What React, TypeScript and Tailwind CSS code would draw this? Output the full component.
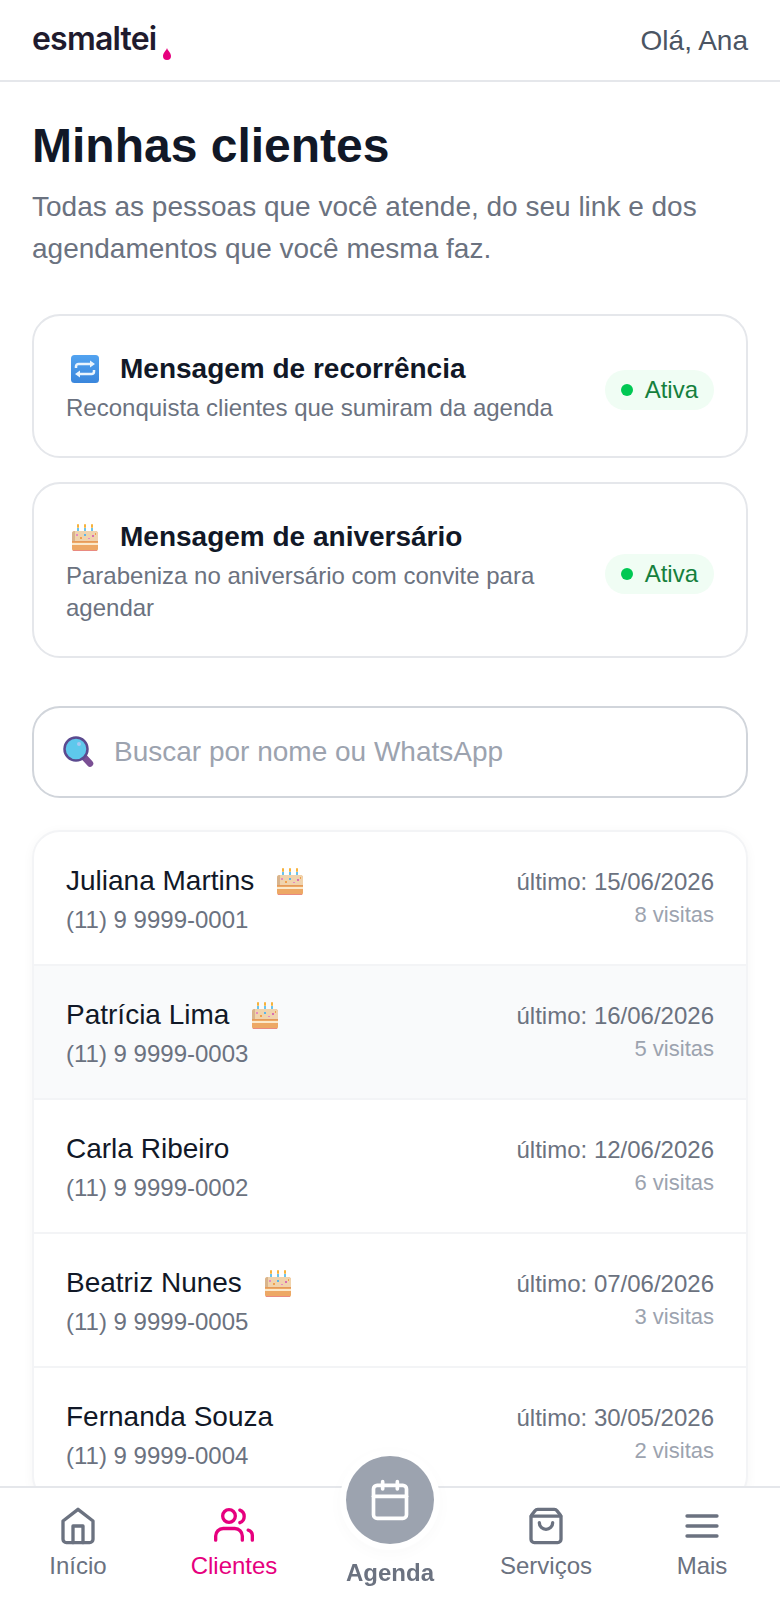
import { Calendar, ShoppingBag } from 'lucide-react';

const clients = [
  { name: 'Juliana Martins', phone: '(11) 9 9999-0001', last: '15/06/2026', visits: 8, birthday: true, hover: false },
  { name: 'Patrícia Lima', phone: '(11) 9 9999-0003', last: '16/06/2026', visits: 5, birthday: true, hover: true },
  { name: 'Carla Ribeiro', phone: '(11) 9 9999-0002', last: '12/06/2026', visits: 6, birthday: false, hover: false },
  { name: 'Beatriz Nunes', phone: '(11) 9 9999-0005', last: '07/06/2026', visits: 3, birthday: true, hover: false },
  { name: 'Fernanda Souza', phone: '(11) 9 9999-0004', last: '30/05/2026', visits: 2, birthday: false, hover: false },
];

function CakeIcon() {
  return (
    <svg width="28" height="28" viewBox="0 0 28 28" className="shrink-0">
      <rect x="6" y="5" width="2" height="5" fill="#6cc4ea" />
      <rect x="13" y="5" width="2" height="5" fill="#6cc4ea" />
      <rect x="20" y="5" width="2" height="5" fill="#6cc4ea" />
      <rect x="6" y="1" width="2" height="4" rx="1" fill="#f7b23b" />
      <rect x="13" y="1" width="2" height="4" rx="1" fill="#f7b23b" />
      <rect x="20" y="1" width="2" height="4" rx="1" fill="#f7b23b" />
      <path d="M1 11a3 3 0 0 1 3-3h20a3 3 0 0 1 3 3v15a2 2 0 0 1-2 2H3a2 2 0 0 1-2-2z" fill="#eda865" />
      <path d="M1 11a3 3 0 0 1 3-3h20a3 3 0 0 1 3 3v7H1z" fill="#f0d3ad" />
      <path d="M1 11a3 3 0 0 1 3-3v11H1z" fill="#d9b48c" />
      <rect x="1" y="18" width="26" height="1" fill="#e59a5a" />
      <rect x="1" y="20" width="26" height="2" fill="#fbe9cb" />
      <rect x="2" y="27" width="24" height="1" fill="#e98a80" />
      <rect x="5" y="11" width="2" height="2" fill="#e58bc0" />
      <rect x="13" y="11" width="2" height="2" fill="#59b5ea" />
      <rect x="21" y="12" width="2" height="2" fill="#d96fb0" />
      <rect x="9" y="14" width="2" height="2" fill="#f0a04b" />
      <rect x="17" y="15" width="2" height="1" fill="#e58bc0" />
      <rect x="24" y="10" width="1" height="2" fill="#f0a04b" />
    </svg>
  );
}

function RepeatIcon() {
  return (
    <svg width="28" height="28" viewBox="0 0 28 28" className="shrink-0">
      <defs>
        <linearGradient id="repeat-bg" x1="0" y1="0" x2="0" y2="1">
          <stop offset="0" stopColor="#52a3f0" />
          <stop offset="1" stopColor="#3a86dc" />
        </linearGradient>
      </defs>
      <rect width="28" height="28" rx="3.500" fill="url(#repeat-bg)" />
      <g fill="none" stroke="#eaf4fd" strokeWidth="2.500">
        <path d="M5 13v-1.500A2.500 2.500 0 0 1 7.500 9H20" />
        <path d="M23 15v1.500a2.500 2.500 0 0 1-2.500 2.500H8" />
      </g>
      <path d="M19 5.500v7L24 9zM9 15.500v7L4 19z" fill="#eaf4fd" />
    </svg>
  );
}

function SearchIcon() {
  return (
    <svg width="32" height="32" viewBox="0 0 32 32" className="shrink-0">
      <path d="M22 21l6 6.500" stroke="#7a4f94" strokeWidth="6.500" strokeLinecap="round" />
      <circle cx="14" cy="13" r="11.500" fill="#5ec8ec" stroke="#5b4a8f" strokeWidth="2.500" />
      <circle cx="17" cy="8" r="2" fill="#a9c8f2" />
    </svg>
  );
}

function HomeIcon() {
  return (
    <svg width="40" height="40" viewBox="0 0 24 24" fill="none" stroke="currentColor" strokeWidth="2" strokeLinecap="round" strokeLinejoin="round">
      <path d="m3 9 9-7 9 7v11a2 2 0 0 1-2 2H5a2 2 0 0 1-2-2z" />
      <path d="M9 22V12h6v10" />
    </svg>
  );
}

function UsersIcon() {
  return (
    <svg width="40" height="40" viewBox="0 0 24 24" fill="none" stroke="currentColor" strokeWidth="2" strokeLinecap="round" strokeLinejoin="round">
      <circle cx="9" cy="6" r="3.800" />
      <path d="M15.500 2.500a4 4 0 0 1 0 7.500" />
      <path d="M1 20.500V18a4.500 4.500 0 0 1 4.500-4.500h7A4.500 4.500 0 0 1 17 18v2.500" />
      <path d="M20.500 14.500A3.500 3.500 0 0 1 23 18v2.500" />
    </svg>
  );
}

function MenuIcon() {
  return (
    <svg width="40" height="40" viewBox="0 0 24 24" fill="none" stroke="currentColor" strokeWidth="2" strokeLinecap="round">
      <path d="M3 6h18M3 12h18M3 18h18" />
    </svg>
  );
}

function AutomationCard({ icon, title, text }: { icon: React.ReactNode; title: string; text: string }) {
  return (
    <div className="flex items-center justify-between gap-6 rounded-[28px] border-2 border-[#e5e7eb] bg-white p-8">
      <div className="min-w-0 flex-1">
        <div className="flex items-center gap-4 text-[28px] leading-[42px] font-bold text-[#111827]">
          <span className="flex w-[38px] justify-center">{icon}</span>
          <span>{title}</span>
        </div>
        <p className="mt-[2px] text-[24px] leading-[32px] text-[#6b7280]">{text}</p>
      </div>
      <span className="mt-[7px] flex h-10 shrink-0 items-center gap-3 rounded-full bg-[#f0fdf4] px-4 text-[24px] text-[#15803d]">
        <span className="h-3 w-3 rounded-full bg-[#00c853]" />
        Ativa
      </span>
    </div>
  );
}

function NavItem({ label, active, children }: { label: string; active?: boolean; children: React.ReactNode }) {
  return (
    <div className={`flex flex-1 flex-col items-center gap-1 pt-[18px] text-[24px] leading-[32px] ${active ? 'text-[#e6007e]' : 'text-[#6b7280]'}`}>
      {children}
      <span>{label}</span>
    </div>
  );
}

export default function App() {
  return (
    <div className="relative h-[1600px] overflow-hidden bg-white font-['Liberation_Sans',Arial,sans-serif]">
      <header className="flex h-[82px] items-center justify-between border-b-2 border-[#e5e7eb] px-8">
        <div className="mb-[2px] flex items-end gap-[7px]">
          <span className="font-['Inter',sans-serif] text-[32px] leading-none font-semibold tracking-[-0.025em] text-[#1f1b2e]">esmaltei</span>
          <svg width="8" height="12" viewBox="0 0 8 12" className="mb-[-5px]">
            <path d="M4 0C3.300 2.500 0 5 0 8a4 4 0 0 0 8 0C8 5 4.700 2.500 4 0Z" fill="#e6007e" />
          </svg>
        </div>
        <span className="mt-[2px] text-[28px] text-[#4b5563]">Olá, Ana</span>
      </header>

      <main className="px-8 pt-8">
        <h1 className="text-[48px] leading-[64px] font-bold text-[#111827]">Minhas clientes</h1>
        <p className="mt-2 text-[28px] leading-[42px] text-[#6b7280]">
          Todas as pessoas que você atende, do seu link e dos agendamentos que você mesma faz.
        </p>

        <div className="mt-11 flex flex-col gap-6">
          <AutomationCard icon={<RepeatIcon />} title="Mensagem de recorrência" text="Reconquista clientes que sumiram da agenda" />
          <AutomationCard icon={<CakeIcon />} title="Mensagem de aniversário" text="Parabeniza no aniversário com convite para agendar" />
        </div>

        <div className="mt-12 flex h-[92px] items-center gap-5 rounded-[28px] border-2 border-[#d1d5db] bg-white px-7">
          <SearchIcon />
          <span className="text-[28px] text-[#9ca3af]">Buscar por nome ou WhatsApp</span>
        </div>

        <div className="mt-8 overflow-hidden rounded-[28px] border-2 border-[#f3f4f6] bg-white shadow-[0_2px_12px_rgba(0,0,0,0.04)]">
          {clients.map((c) => (
            <div key={c.name} className={`flex h-[134px] items-center justify-between border-b-2 border-[#f3f4f6] px-8 ${c.hover ? 'bg-[#f9fafb]' : ''}`}>
              <div className="mt-[2px]">
                <div className="flex items-center gap-[22px] text-[28px] leading-[42px] text-[#111827]">
                  <span>{c.name}</span>
                  {c.birthday && <CakeIcon />}
                </div>
                <div className="text-[24px] leading-[36px] text-[#6b7280]">{c.phone}</div>
              </div>
              <div className="mt-[1px] text-right">
                <div className="text-[24px] leading-[32px] text-[#6b7280]">último: {c.last}</div>
                <div className="mt-[1px] text-[22px] leading-[32px] text-[#9ca3af]">{c.visits} visitas</div>
              </div>
            </div>
          ))}
        </div>
      </main>

      <nav className="fixed right-0 bottom-0 left-0 flex h-[114px] border-t-2 border-[#e5e7eb] bg-white">
        <NavItem label="Início"><HomeIcon /></NavItem>
        <NavItem label="Clientes" active><UsersIcon /></NavItem>
        <div className="relative flex-1">
          <div className="absolute -top-[32px] left-1/2 flex h-[88px] w-[88px] -translate-x-1/2 items-center justify-center rounded-full bg-[#9ca3af] text-white shadow-[0_0_0_6px_#ffffff,0_4px_16px_6px_rgba(0,0,0,0.025)]">
            <Calendar size={44} strokeWidth={2} />
          </div>
          <span className="absolute top-[69px] left-0 w-full text-center text-[24px] leading-[32px] font-bold text-[#6b7280]">Agenda</span>
        </div>
        <NavItem label="Serviços"><ShoppingBag size={40} strokeWidth={2} /></NavItem>
        <NavItem label="Mais"><MenuIcon /></NavItem>
      </nav>
    </div>
  );
}
